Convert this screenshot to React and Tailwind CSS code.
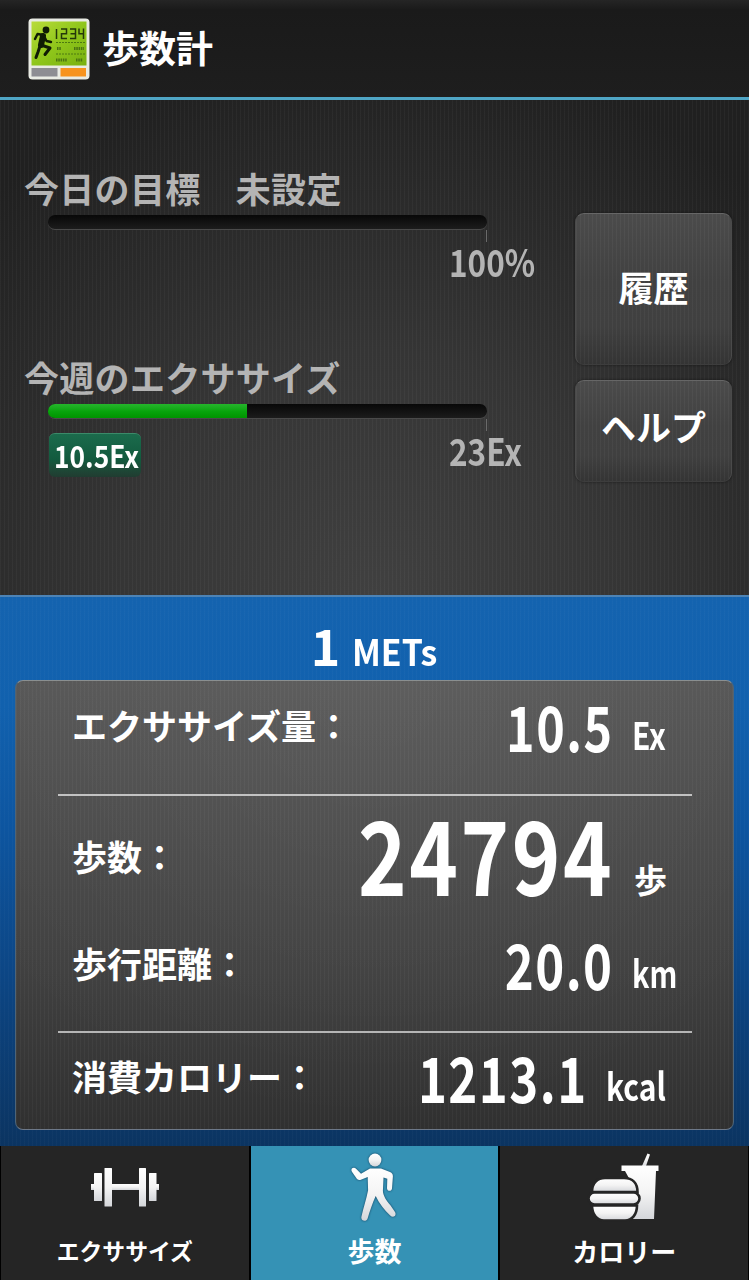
import { clsx } from 'clsx';

function AppIcon() {
  return (
    <svg viewBox="0 0 62 62" className="w-[62px] h-[62px] shrink-0">
      <defs>
        <linearGradient id="lcd" x1="0" y1="0" x2="1" y2="1">
          <stop offset="0" stopColor="#b9dc3a" />
          <stop offset="0.5" stopColor="#8fc61b" />
          <stop offset="1" stopColor="#78b010" />
        </linearGradient>
      </defs>
      <rect x="0.5" y="0.5" width="61" height="61" rx="4" fill="#e9ebe4" />
      <rect x="3.5" y="3.5" width="55" height="44" fill="url(#lcd)" />
      <rect x="3.5" y="50" width="26" height="8.5" fill="#8d8d93" />
      <rect x="32.5" y="50" width="25.5" height="8.5" fill="#f7931e" />
      {/* runner */}
      <circle cx="18" cy="12" r="3.4" fill="#101c04" />
      <g fill="none" stroke="#101c04" strokeWidth="3" strokeLinecap="round" strokeLinejoin="round">
        <path d="M7 21l2.500-5 6 1" strokeWidth="2.400" />
        <path d="M15 18l-2 9" strokeWidth="6" />
        <path d="M16 18l2.500 5 4.500 1" strokeWidth="2.400" />
        <path d="M13 27l9 3-5 6.500" />
        <path d="M12 28l-2 6-2 5.500" />
      </g>
      {/* 1234 lcd segments */}
      <g fill="none" stroke="#25380b" strokeWidth="1.500">
        <path d="M28.500 11v10" />
        <path d="M33 11h5.500v4.700H33.500v4.800H39" />
        <path d="M42 11h5.500v9.500H42M42.500 15.700h5" />
        <path d="M51 10.500v5.200h4.500M55.500 10.500v10.500" />
      </g>
      <g stroke="#4d7a10" strokeWidth="1" strokeDasharray="2 1">
        <path d="M28 24.500h29M28 36h29" />
      </g>
      <g stroke="#4a7312" strokeWidth="3" strokeDasharray="1.500 0.800">
        <path d="M29 30.500h4M46 30.500h10M28 42h11M48 42h7" />
      </g>
    </svg>
  );
}

function IconGradient({ id }) {
  return (
    <defs>
      <linearGradient id={id} x1="0" y1="0" x2="0" y2="1">
        <stop offset="0" stopColor="#ffffff" />
        <stop offset="0.500" stopColor="#f4f4f4" />
        <stop offset="1" stopColor="#d4d6da" />
      </linearGradient>
    </defs>
  );
}

function DumbbellIcon() {
  return (
    <svg viewBox="0 0 74 74" className="w-[74px] h-[74px]">
      <IconGradient id="gDumbbell" />
      <g fill="url(#gDumbbell)">
        <rect x="3" y="34" width="4" height="6" />
        <rect x="6" y="23" width="8" height="28" rx="0.500" />
        <rect x="16.500" y="18" width="7.500" height="38.500" rx="0.500" />
        <rect x="24" y="34" width="27" height="6" />
        <rect x="51" y="18" width="7" height="38.500" rx="0.500" />
        <rect x="61" y="23" width="7.500" height="28" rx="0.500" />
        <rect x="68" y="34" width="3" height="6" />
      </g>
    </svg>
  );
}

function WalkIcon() {
  return (
    <svg viewBox="0 0 74 74" className="w-[74px] h-[74px] drop-shadow-[0_0_1px_rgba(10,50,80,0.9)]">
      <IconGradient id="gWalk" />
      <g fill="url(#gWalk)">
        <circle cx="38" cy="10" r="6.400" />
        <path d="M33 18.500h11l9 3.600c2.200 1 3 2.300 2.900 4.400l-.9 12c-.3 3.300-5 3-5-.2l.3-9.600-3.800-1.300-.6 13.500c.2 4.600 3.500 9.800 7.500 14.300l4.600 6.800c2 3.600-1.700 6.600-4.800 3.600-5.800-5.400-11-12-14.500-19.600-3.300 7.600-5.900 14.700-8 22.200-1.300 4.400-7.200 3-6.300-1.500 2.200-10 5-17.500 6.700-26.500l-.4-13.300-6.800 2.800c-1.500.5-2.800.2-3.900-.8l-4.900-7c-2.300-3.400 1.700-5.800 4.200-3l4.700 4.800z" />
      </g>
    </svg>
  );
}

function FoodIcon() {
  return (
    <svg viewBox="0 0 74 74" className="w-[74px] h-[74px]">
      <IconGradient id="gFood" />
      <g fill="url(#gFood)">
        <path d="M60.500 3.500l2.500 1-4 11.500h-4z" />
        <path d="M34.500 15.500h37v5.500h-2.500l-2 48h-24V30l-5-9h-3.500z" />
      </g>
      <g fill="url(#gFood)" stroke="#252525" strokeWidth="2.600">
        <path d="M5 42c0-9 5.500-14 13-14h19c8.500 0 13.500 5 13.500 14z" />
        <path d="M5 55.500h45c0 9-5 15-12 15H17c-7 0-12-6-12-15z" />
        <rect x="1.500" y="42.500" width="51" height="12" rx="6" />
      </g>
    </svg>
  );
}

function Gauge({ title, percent, max, children }) {
  return (
    <div>
      <h2 className="pl-[24px] text-[35px] leading-[38px] pb-[2px] tracking-[0.3px] font-bold text-[#b4b4b4] whitespace-pre">{title}</h2>
      <div className="ml-[48px] mt-[6px] w-[439px] h-[15px] rounded-[7px] overflow-hidden bg-linear-to-b from-[#080808] to-[#1c1c1c] border-b border-[#4a4a4a]">
        <div
          className="h-full bg-linear-to-b from-[#25b52b] via-[#08a50d] to-[#009400]"
          style={{ width: `${percent}%` }}
        />
      </div>
      <div className="ml-[486px] w-px h-[12px] bg-[#6a6a6a]" />
      <div className="flex pl-[49px] h-[48px]">
        <div className="w-[400px] pt-[2px]">{children}</div>
        <span className="origin-left scale-x-[0.830] text-[38px] leading-[37px] font-bold text-[#b4b4b4] whitespace-nowrap">{max}</span>
      </div>
    </div>
  );
}

function SideButton({ className, children }) {
  return (
    <button
      type="button"
      className={clsx(
        'w-[157px] rounded-[9px] border border-t-[#666] border-x-[#4a4a4a] border-b-[#3d3d3d] text-[35px] leading-none font-bold text-white shadow-[0_0_3px_rgba(0,0,0,0.5)]',
        'bg-[repeating-linear-gradient(90deg,rgba(255,255,255,0.04)_0_1px,transparent_1px_4px),linear-gradient(to_bottom,#4b4b4b,#414141_45%,#404040_75%,#343434)]',
        className
      )}
    >
      {children}
    </button>
  );
}

function StatRow({ label, value, unit, className, labelClass, valueClass, unitClass, boxClass = 'w-[79px]' }) {
  return (
    <div className={clsx('flex items-end', className)}>
      <span className={clsx('text-[35px] leading-none font-bold whitespace-nowrap', labelClass)}>{label}</span>
      <span className={clsx('ml-auto origin-right leading-none font-bold tracking-[0.030em]', valueClass)}>
        {value}
      </span>
      <span className={clsx('shrink-0 leading-none pl-[18px]', boxClass, unitClass)}>{unit}</span>
    </div>
  );
}

const unitText = 'inline-block origin-left text-[38px] leading-none font-bold';

const tabs = [
  { label: 'エクササイズ', icon: DumbbellIcon, text: 'text-[22.800px]' },
  { label: '歩数', icon: WalkIcon, text: 'text-[27px]', active: true },
  { label: 'カロリー', icon: FoodIcon, text: 'text-[26px]' },
];

export default function App() {
  return (
    <div className="w-[749px] h-[1280px] overflow-hidden flex flex-col bg-[#1c1c1c] text-white font-['Noto_Sans_CJK_JP',sans-serif]">
      <header className="h-[100px] shrink-0 flex items-start pt-[18px] pl-[28px] gap-[12px] border-b-[3px] border-[#4fa5c5] bg-linear-to-b from-[#252525] via-[#1a1a1a] via-10% to-[#1e1e1e]">
        <AppIcon />
        <h1 className="mt-[9px] text-[37px] leading-[40px] font-bold">歩数計</h1>
      </header>

      {/* goals */}
      <section className="h-[495px] shrink-0 flex bg-[repeating-linear-gradient(90deg,rgba(255,255,255,0.035)_0_1px,transparent_1px_4px),radial-gradient(ellipse_75%_110%_at_50%_100%,#404040_0%,#353535_45%,#202020_100%)]">
        <div className="w-[575px] pt-[69px] flex flex-col gap-[68px]">
          <Gauge title="今日の目標　未設定" percent={0} max="100%" />
          <Gauge title="今週のエクササイズ" percent={45.3} max="23Ex">
            <span className="flex w-[92px] h-[44px] rounded-[6px] border-t border-[#3b8a69] bg-linear-to-b from-[#1b6b4c] via-[#125a3e] via-60% to-[#203c31] pl-[5px]">
              <span className="origin-left scale-x-[0.850] text-[31px] leading-[41px] font-bold">10.5Ex</span>
            </span>
          </Gauge>
        </div>
        <div className="pt-[113px] flex flex-col gap-[15px]">
          <SideButton className="h-[152px] pb-[5px]">履歴</SideButton>
          <SideButton className="h-[102px] pb-[11px]">ヘルプ</SideButton>
        </div>
      </section>

      {/* today's results */}
      <section className="h-[551px] shrink-0 border-t-2 border-[#4d83b5] px-[15px] bg-[repeating-linear-gradient(90deg,rgba(255,255,255,0.025)_0_1px,transparent_1px_4px),linear-gradient(to_bottom,#1463af,#1161ae_20%,#0d55a0_42%,#0c4583_70%,#0b3461)]">
        <div className="h-[83px] flex items-baseline justify-center gap-[17px] pt-[12px] pl-[10px]">
          <span className="text-[50px] leading-[70px] font-bold w-[18px] flex justify-center">1</span>
          <span className="text-[36px] leading-[70px] font-bold origin-left scale-x-[0.940]">METs</span>
        </div>
        <div className="h-[450px] rounded-[8px] border border-t-[#8a8f90] border-x-[#4d6478] border-b-[#6d7888] pl-[56px] pr-[40px] bg-[repeating-linear-gradient(90deg,rgba(255,255,255,0.035)_0_1px,transparent_1px_4px),radial-gradient(ellipse_70%_100%_at_50%_0%,rgba(255,255,255,0.05),transparent),linear-gradient(to_bottom,#565656,#4c4c4c_30%,#404040_65%,#303030)]">
          <StatRow
            className="h-[75px]"
            label="エクササイズ量："
            labelClass="pb-[14px]"
            value="10.5"
            valueClass="text-[63px] scale-x-[0.770]"
            unit={<span className={clsx(unitText, 'scale-x-[0.790]')}>Ex</span>}
            unitClass="pb-[3px]"
          />
          <div className="h-[2px] mt-[38px] -ml-[14px] w-[634px] bg-[#c2c2c2]" />
          <StatRow
            className="h-[107px]"
            label="歩数："
            labelClass="pb-[30px]"
            value="24794"
            valueClass="text-[102px] scale-x-[0.810]"
            unit={<span className="inline-block pl-[2px] text-[33px] leading-none font-bold">歩</span>}
            unitClass="pb-[7px]"
          />
          <StatRow
            className="h-[91px]"
            label="歩行距離："
            labelClass="pb-[14px]"
            value="20.0"
            valueClass="text-[63px] scale-x-[0.780]"
            unit={<span className={clsx(unitText, 'scale-x-[0.760]')}>km</span>}
            unitClass="pb-[3px]"
          />
          <div className="h-[2px] mt-[37px] -ml-[14px] w-[634px] bg-[#b5b5b5]" />
          <StatRow
            className="h-[74px]"
            label="消費カロリー："
            labelClass="pb-[14px]"
            value="1213.1"
            valueClass="text-[63px] scale-x-[0.780]"
            unit={<span className={clsx(unitText, 'scale-x-[0.790]')}>kcal</span>}
            unitClass="pb-[3px]"
            boxClass="w-[105px]"
          />
        </div>
      </section>

      <nav className="flex-1 grid grid-cols-3 bg-black gap-[2px] px-[1px]">
        {tabs.map((tab) => (
          <button
            key={tab.label}
            type="button"
            className={clsx('flex flex-col items-center pt-[4px]', tab.active ? 'bg-[#3592b5]' : 'bg-[#252525]')}
          >
            <tab.icon />
            <span className={clsx('mt-[9px] leading-[36px] font-bold', tab.text)}>{tab.label}</span>
          </button>
        ))}
      </nav>
    </div>
  );
}
